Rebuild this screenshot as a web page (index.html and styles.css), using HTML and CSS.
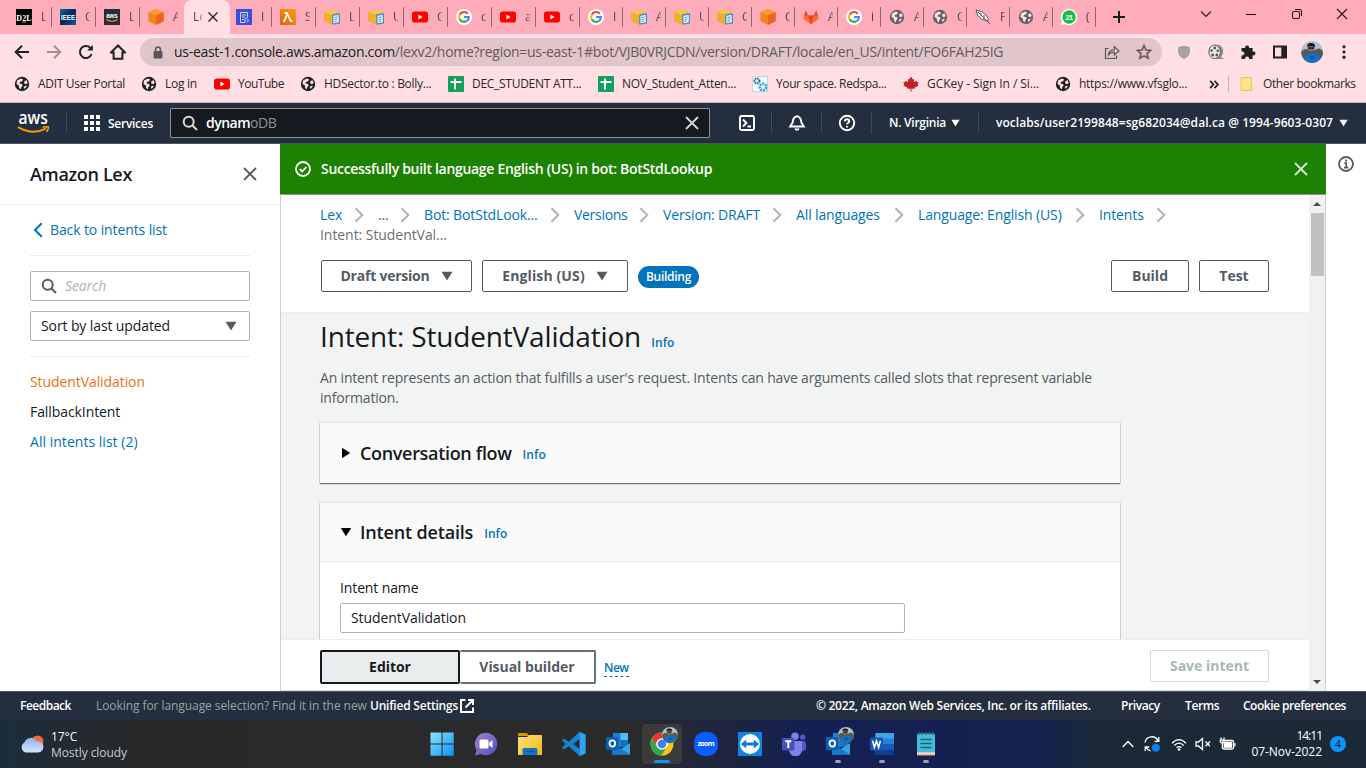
FILE: index.html
```html
<!DOCTYPE html>
<html lang="en">
<head>
<meta charset="utf-8">
<title>Amazon Lex</title>
<link rel="stylesheet" href="styles.css">
</head>
<body>
<svg class="defs" width="0" height="0">
  <defs>
    <linearGradient id="gWin" x1="0" y1="0" x2="1" y2="1"><stop offset="0" stop-color="#8be4ff"/><stop offset="1" stop-color="#0a93f5"/></linearGradient>
    <linearGradient id="gChat" x1="0" y1="0" x2="1" y2="1"><stop offset="0" stop-color="#a586c4"/><stop offset="1" stop-color="#4c4fc4"/></linearGradient>
    <linearGradient id="gFold" x1="0" y1="0" x2="1" y2="1"><stop offset="0" stop-color="#ffe083"/><stop offset="1" stop-color="#f9b70f"/></linearGradient>
    <linearGradient id="gCloud" x1="0" y1="0" x2="0" y2="1"><stop offset="0" stop-color="#8fb4ee"/><stop offset="1" stop-color="#d5e4fa"/></linearGradient>
    <linearGradient id="gLambda" x1="0" y1="1" x2="1" y2="0"><stop offset="0" stop-color="#d86613"/><stop offset="1" stop-color="#ff9d0a"/></linearGradient>
    <linearGradient id="gIeee" x1="0" y1="0" x2="1" y2="1"><stop offset="0" stop-color="#0a6aa8"/><stop offset=".5" stop-color="#03245c"/><stop offset="1" stop-color="#0a5c9e"/></linearGradient>
  </defs>
  <symbol id="globe" viewBox="0 0 16 16"><circle cx="8" cy="8" r="7.2"/><path d="M3 4.4 6.8 2.6 9 3.3 8.2 5.2 5.8 6.1 5.6 7.6 8 8 8.6 9.8 7.2 11.2 6.8 13.6 5 11.8 4.9 9.6 2.5 8ZM10.5 5.1 12.7 4.3 13.7 7 12 8.3 10.1 7.2ZM10.6 10 13 9.8 11 12.8 9.7 12Z" fill="#ffdfe4"/></symbol>
  <symbol id="cube" viewBox="0 0 16 16"><path d="M8 0 15.6 3.2V12.3L8 16 .4 12.3V3.2Z" fill="#f58220"/><path d="M8 0 15.6 3.2 8 6.6.4 3.2Z" fill="#fb9b30"/><path d="M8 6.6 15.6 3.2V12.3L8 16Z" fill="#e8661b"/></symbol>
  <symbol id="bucket" viewBox="0 0 16 16"><path d="M0 3 7 .4 14 3V11.8L7 15.5 0 12Z" fill="#eeb02c"/><path d="M0 3 7 .4 14 3 7 5.6Z" fill="#f6c55a"/><path d="M8.2 5.5 16 4.2V14.5L8.2 15.8Z" fill="#3f8fc6"/><path d="M9.5 6.8 14.7 6V13.3L9.5 14.2Z" fill="#fff"/><path d="M10.4 8.4 13.6 7.9M10.4 10.4 13.6 9.9M10.4 12.4 13 12" stroke="#3f8fc6"/></symbol>
  <symbol id="yt" viewBox="0 0 16 16"><rect y="2.4" width="16" height="11.2" rx="2.8" fill="#f00"/><path d="M6.4 5.6 10.6 8 6.4 10.4Z" fill="#fff"/></symbol>
  <symbol id="google" viewBox="0 0 16 16"><circle cx="8" cy="8" r="8" fill="#fff"/><g fill="none" stroke-width="2.1"><path d="M11.8 4.7A4.9 4.9 0 0 0 3.7 5.7" stroke="#ea4335"/><path d="M3.7 5.6A5 5 0 0 0 3.7 10.4" stroke="#fbbc05"/><path d="M3.7 10.3A4.9 4.9 0 0 0 11.2 11.7" stroke="#34a853"/><path d="M11.2 11.7Q12.9 10.3 12.9 8H8" stroke="#4285f4"/></g></symbol>
  <symbol id="sheet" viewBox="0 0 16 16"><rect width="16" height="16" rx="1" fill="#12a05c"/><path d="M2.5 6H13.5M7 2.5V13.5" stroke="#fff" stroke-width="2"/></symbol>
  <symbol id="loupe" viewBox="0 0 16 16"><g fill="none" stroke="currentColor" stroke-width="2"><circle cx="6.7" cy="6.7" r="5"/><path d="M10.5 10.5 15 15"/></g></symbol>
  <symbol id="cross" viewBox="0 0 16 16"><path d="M2 2 14 14M14 2 2 14" fill="none" stroke="currentColor" stroke-width="1.8"/></symbol>
  <symbol id="chev" viewBox="0 0 10 16"><path d="M1.5 1.2 8.3 8 1.5 14.8" fill="none" stroke="#aab7b8" stroke-width="2"/></symbol>
  <symbol id="down" viewBox="0 0 12 10"><path d="M.5.7H11.5L6 9.6Z" fill="currentColor"/></symbol>
  <symbol id="face" viewBox="0 0 22 22"><circle cx="11" cy="11" r="11" fill="#a9c4d4"/><path d="M0 11Q4 6 8 9H14Q19 5 22 11V13A11 11 0 0 1 1 15Z" fill="#5f5848"/><path d="M3.5 19Q4 12 10 11.5 18 11 19.5 17A11 11 0 0 1 3.5 19Z" fill="#1272c9"/><path d="M9 15.5 13 14.5 13.5 17 9.5 18Z" fill="#0b4c96"/><circle cx="10" cy="7" r="3.3" fill="#9c6c50"/><path d="M6.2 6Q5.8 2 10 2 14.4 2 14 6Q10 3.9 6.2 6Z" fill="#17171c"/><path d="M7 6.3H13.3V7.8H7Z" fill="#17171c"/></symbol>
  <symbol id="outlook" viewBox="0 0 24 24"><rect x="7" y="1" width="15" height="14" fill="#1a83d8"/><rect x="14.5" y="1" width="7.5" height="7" fill="#4bc0f3"/><rect x="14.5" y="8" width="7.5" height="7" fill="#1572be"/><path d="M6 11 15 17 24 11V22.5H6Z" fill="#35a5ea"/><path d="M6 11 24 22.5H6Z" fill="#1479cf"/><rect y="5" width="12.5" height="13" rx="1" fill="#0a60b4"/><ellipse cx="6.3" cy="11.5" rx="2.8" ry="3.2" fill="none" stroke="#fff" stroke-width="1.8"/></symbol>
</svg>

<header class="browser">
  <div class="tabstrip">
    <div class="tab"><svg viewBox="0 0 16 16"><rect width="16" height="16"/><text class="fav-serif" x="0.3" y="11.6" fill="#fff" textLength="15.4">D2L</text><path d="M6 13H10" stroke="#f7941e"/></svg><span>L</span></div>
    <div class="tab"><svg viewBox="0 0 16 16"><rect width="16" height="16" fill="url(#gIeee)"/><text class="fav-sans" x="1" y="11" fill="#fff" textLength="14" lengthAdjust="spacingAndGlyphs">IEEE</text></svg><span>C</span></div>
    <div class="tab"><svg viewBox="0 0 16 16"><rect width="16" height="16" fill="#232f3e"/><text class="fav-sans small" x="2.2" y="8.6" fill="#fff" textLength="11.6" lengthAdjust="spacingAndGlyphs">aws</text><path d="M2.5 10.5Q8 14 13.5 10.5" stroke="#f90" fill="none" stroke-width="1.2"/></svg><span>L</span></div>
    <div class="tab plain"><svg><use href="#cube"/></svg><span>A</span></div>
    <div class="tab active"><span>Le</span><svg class="tab-close"><use href="#cross"/></svg></div>
    <div class="tab"><svg viewBox="0 0 16 16"><rect width="16" height="16" fill="#3b4ddb"/><path d="M4.5 3.5H11.5V8.5L9 10V13.5H4.5ZM6 6H10M6 8H9M6 10.5H8M11.5 10 12.5 12 10.5 13" fill="none" stroke="#cfd6ff"/></svg><span>I</span></div>
    <div class="tab"><svg viewBox="0 0 16 16"><rect width="16" height="16" fill="url(#gLambda)"/><path d="M4.5 3H7.5L11.3 11.4 12.5 11V13H10.3L7.4 6.8 4.8 13H2.8L6.5 5 4.5 4.8Z" fill="#fff"/></svg><span>S</span></div>
    <div class="tab"><svg><use href="#bucket"/></svg><span>L</span></div>
    <div class="tab"><svg><use href="#bucket"/></svg><span>U</span></div>
    <div class="tab"><svg><use href="#yt"/></svg><span>C</span></div>
    <div class="tab"><svg><use href="#google"/></svg><span>c</span></div>
    <div class="tab"><svg><use href="#yt"/></svg><span>a</span></div>
    <div class="tab"><svg><use href="#yt"/></svg><span>c</span></div>
    <div class="tab narrow"><svg><use href="#google"/></svg><span>I</span></div>
    <div class="tab narrow"><svg><use href="#bucket"/></svg><span>A</span></div>
    <div class="tab narrow"><svg><use href="#bucket"/></svg><span>U</span></div>
    <div class="tab narrow"><svg><use href="#bucket"/></svg><span>C</span></div>
    <div class="tab narrow"><svg><use href="#cube"/></svg><span>C</span></div>
    <div class="tab narrow"><svg viewBox="0 0 16 16"><path d="M8 15.5.2 9.5 2.8 1.5 5 6.6H11L13.2 1.5 15.8 9.5Z" fill="#fc6d26"/><path d="M8 15.5 5 6.6H11Z" fill="#e24329"/><path d="M2.8 1.5 5 6.6H1.2ZM13.2 1.5 11 6.6H14.8Z" fill="#e24329"/></svg><span>A</span></div>
    <div class="tab narrow"><svg><use href="#google"/></svg><span>i</span></div>
    <div class="tab narrow grey"><svg><use href="#globe"/></svg><span>A</span></div>
    <div class="tab narrow grey"><svg><use href="#globe"/></svg><span>C</span></div>
    <div class="tab narrow"><svg viewBox="0 0 16 16"><path d="M1 1Q8 2 11 6T13 12Q6 11 3 7Z" fill="#fff" stroke="#444" stroke-width=".9"/><path d="M3 3 15 15M6 4 6 7M9 6 9 10" stroke="#444" stroke-width=".9"/></svg><span>F</span></div>
    <div class="tab narrow grey"><svg><use href="#globe"/></svg><span>A</span></div>
    <div class="tab narrow"><svg viewBox="0 0 16 16"><path d="M8 0A8 8 0 1 1 4.2 15L0 16 1 12A8 8 0 0 1 8 0Z" fill="#fff"/><circle cx="8.1" cy="8" r="6.7" fill="#12c144"/><text class="fav-sans" x="4.2" y="11" fill="#fff" textLength="8">21</text></svg><span>(</span></div>
    <svg class="new-tab" viewBox="0 0 12 12"><path d="M6 0V12M0 6H12" stroke="#1d1d1f" stroke-width="2"/></svg>
    <div class="window-buttons">
      <svg viewBox="0 0 12 12"><path d="M1 3.5 6 8.5 11 3.5"/></svg>
      <svg viewBox="0 0 12 12"><path d="M1 6.5H11"/></svg>
      <svg viewBox="0 0 12 12"><rect x="1.5" y="3.5" width="7" height="7" rx="1.5"/><path d="M4 1.5H8.5Q10.5 1.5 10.5 3.5V8"/></svg>
      <svg viewBox="0 0 12 12"><path d="M1 1 11 11M11 1 1 11"/></svg>
    </div>
  </div>

  <div class="toolbar">
    <div class="nav-buttons">
      <svg viewBox="0 0 16 16"><path d="M15 8H2M8 1.7 1.7 8 8 14.3"/></svg>
      <svg class="dim" viewBox="0 0 16 16"><path d="M1 8H14M8 1.7 14.3 8 8 14.3"/></svg>
      <svg viewBox="0 0 16 16"><path d="M13.6 10A6 6 0 1 1 12.2 3.8L14 5.6"/><path d="M14.8 1V6.6H9.2Z" fill="#1f2023" stroke="none"/></svg>
      <svg viewBox="0 0 16 16"><path d="M8 1.5 1 8.5H3.6V14.8H12.4V8.5H15Z"/></svg>
    </div>
    <div class="address">
      <svg class="lock" viewBox="0 0 10 13"><rect x=".6" y="5" width="8.8" height="7.6" rx="1" fill="#5b5357"/><path d="M2.6 5V3.4A2.4 2.4 0 0 1 7.4 3.4V5" fill="none" stroke="#5b5357" stroke-width="1.5"/></svg>
      <span class="url"><b>us-east-1.console.aws.amazon.com</b>/lexv2/home?region=us-east-1#bot/VJB0VRJCDN/version/DRAFT/locale/en_US/intent/FO6FAH25IG</span>
      <svg class="share" viewBox="0 0 16 16"><path d="M4.5 4.5H1.5V14.5H12.5V11.5M4.5 10.8Q5 5.8 10.3 5.8V2.6L15 7 10.3 11V8Q6.5 8 4.5 10.8Z"/></svg>
      <svg class="star" viewBox="0 0 16 16"><path d="M8 1.6 9.9 6 14.7 6.4 11 9.6 12.2 14.3 8 11.8 3.8 14.3 5 9.6 1.3 6.4 6.1 6Z"/></svg>
    </div>
    <div class="extensions">
      <svg viewBox="0 0 16 16"><path d="M8 1.5 14 3.2V8Q13.5 12.5 8 15 2.5 12.5 2 8V3.2Z" fill="#a5a3a4"/></svg>
      <svg viewBox="0 0 16 16"><path d="M6 1 11.5 1Q16 4 15 9L13 14H15.5V15H8Z" fill="#8b8b8b"/><ellipse cx="6.6" cy="7.8" rx="5.8" ry="6.8" fill="#e6e6e6" stroke="#5d5d5d"/><g fill="#555"><circle cx="6.8" cy="4" r="1.4"/><circle cx="3.5" cy="6.6" r="1.3"/><circle cx="9.8" cy="6.8" r="1.3"/><circle cx="4.7" cy="11" r="1.4"/><circle cx="8.8" cy="11" r="1.4"/></g></svg>
      <svg viewBox="0 0 16 16"><path d="M1.5 4H5.2A2 2 0 1 1 9 4H12.6V7.6A2 2 0 1 1 12.6 11.2V15H9A2 2 0 1 0 5.2 15H1.5V11.2A2 2 0 1 0 1.5 7.6Z" fill="#202124"/></svg>
      <svg viewBox="0 0 16 16"><path d="M1 1.5H15V14.5H1ZM3 3.5V12.5H9.3V3.5Z" fill="#202124" fill-rule="evenodd"/></svg>
      <svg class="profile"><use href="#face"/></svg>
      <svg class="dots" viewBox="0 0 4 16"><circle cx="2" cy="2.8" r="1.6"/><circle cx="2" cy="8" r="1.6"/><circle cx="2" cy="13.2" r="1.6"/></svg>
    </div>
  </div>

  <nav class="bookmarks">
    <a class="bm b1"><svg><use href="#globe"/></svg><span class="t-adit">ADIT User Portal</span></a>
    <a class="bm b2"><svg><use href="#globe"/></svg><span>Log in</span></a>
    <a class="bm b3"><svg><use href="#yt"/></svg><span class="t-tight">YouTube</span></a>
    <a class="bm b4"><svg><use href="#globe"/></svg><span>HDSector.to : Bolly...</span></a>
    <a class="bm b5"><svg><use href="#sheet"/></svg><span>DEC_STUDENT ATT...</span></a>
    <a class="bm b6"><svg><use href="#sheet"/></svg><span>NOV_Student_Atten...</span></a>
    <a class="bm b7"><svg viewBox="0 0 16 16"><rect x=".5" y=".5" width="15" height="15" fill="#f4fafc" stroke="#c5d2d6"/><circle cx="5" cy="5" r="2.5" fill="none" stroke="#1d6f92" stroke-width="2" stroke-dasharray="1.6 .7"/><circle cx="11" cy="11" r="3.2" fill="none" stroke="#35a8da" stroke-width="2.6" stroke-dasharray="2 .8"/></svg><span class="t-tighter">Your space. Redspa...</span></a>
    <a class="bm b8"><svg viewBox="0 0 16 16"><path d="M8 .5 9.8 3.6 11.2 2.9 10.8 6.3 13.3 4.6 13.6 6 15.8 6.3 14.6 8.6 15.5 9.4 11.2 12 11.6 13 8.5 12.6V15.5H7.5V12.6L4.4 13 4.8 12 .5 9.4 1.4 8.6.2 6.3 2.4 6 2.7 4.6 5.2 6.3 4.8 2.9 6.2 3.6Z" fill="#c2211f"/></svg><span class="t-loose">GCKey - Sign In / Si...</span></a>
    <a class="bm b9"><svg><use href="#globe"/></svg><span>https://www.vfsglo...</span></a>
    <span class="more"><svg viewBox="0 0 9 8"><path d="M1 .8 4 4 1 7.2M5 .8 8 4 5 7.2"/></svg></span>
    <a class="bm other"><svg viewBox="0 0 16 16"><path d="M2 1.5H12.5V11L11 14.5H2Z" fill="#fde48c" stroke="#e8c94b"/><path d="M11 10.5H13V14.5H11Z" fill="#fde48c" stroke="#e8c94b" stroke-width=".8"/></svg><span class="t-tighter">Other bookmarks</span></a>
  </nav>
</header>

<div class="aws-header">
  <svg class="aws-logo" viewBox="0 0 32 22"><text x="1.5" y="11.5" fill="#fff" textLength="28.5" lengthAdjust="spacingAndGlyphs">aws</text><path d="M1 14.5Q15 22.5 28 16" fill="none" stroke="#f90" stroke-width="1.9"/><path d="M25 14.5 30.3 14.2Q31 16 28.6 19.3" fill="none" stroke="#f90" stroke-width="1.5"/></svg>
  <i class="sep s1"></i>
  <svg class="grid-icon" viewBox="0 0 16 16"><path d="M0 0H4V4H0ZM6 0H10V4H6ZM12 0H16V4H12ZM0 6H4V10H0ZM6 6H10V10H6ZM12 6H16V10H12ZM0 12H4V16H0ZM6 12H10V16H6ZM12 12H16V16H12Z" fill="#fff"/></svg>
  <span class="services">Services</span>
  <div class="aws-search"><svg class="ico16"><use href="#loupe"/></svg><span class="q"><b>dynam</b>oDB</span><svg class="ico16"><use href="#cross"/></svg></div>
  <div class="aws-item"><svg viewBox="0 0 18 18"><rect x="2" y="2" width="14" height="14" rx="1.5"/><path d="M5 5.5 8.4 9 5 12.5M9.5 12.5H13"/></svg></div>
  <div class="aws-item"><svg viewBox="0 0 18 18"><path d="M9 2.2Q13.3 3.5 13.3 8.5L15.8 12.5H2.2L4.7 8.5Q4.7 3.5 9 2.2ZM7.2 14.5Q9 17 10.8 14.5"/></svg></div>
  <div class="aws-item"><svg viewBox="0 0 18 18"><circle cx="9" cy="9" r="7.2"/><path d="M6.8 7.4Q6.9 5.3 9 5.3T11.2 7.3C11.2 8.9 9 8.8 9 10.6M9 12V13.6"/></svg></div>
  <div class="aws-region"><span>N. Virginia</span><svg class="tri"><use href="#down"/></svg></div>
  <div class="aws-user"><span>voclabs/user2199848=sg682034@dal.ca @ 1994-9603-0307</span><svg class="tri"><use href="#down"/></svg></div>
</div>

<main class="console">
  <aside class="side">
    <div class="side-head"><h2>Amazon Lex</h2><svg class="ico16"><use href="#cross"/></svg></div>
    <div class="side-body">
      <a class="back"><svg viewBox="0 0 10 16"><path d="M8.8 1.2 2 8 8.8 14.8" fill="none" stroke="#0073bb" stroke-width="2"/></svg>Back to intents list</a>
      <div class="field search"><svg class="ico16"><use href="#loupe"/></svg><em>Search</em></div>
      <div class="field select"><span>Sort by last updated</span><svg class="tri"><use href="#down"/></svg></div>
      <ul class="intents">
        <li class="current">StudentValidation</li>
        <li>FallbackIntent</li>
        <li class="all">All intents list (2)</li>
      </ul>
    </div>
  </aside>

  <section class="center">
    <div class="flash">
      <svg class="ok" viewBox="0 0 16 16"><circle cx="8" cy="8" r="7"/><path d="M4.7 8 7.2 10.4 11.4 6"/></svg>
      <span>Successfully built language English (US) in bot: BotStdLookup</span>
      <svg class="ico16"><use href="#cross"/></svg>
    </div>
    <div class="scroller">
      <div class="page">
        <div class="page-top">
          <ol class="crumbs">
            <li class="c1">Lex<svg><use href="#chev"/></svg></li>
            <li class="c2">...<svg><use href="#chev"/></svg></li>
            <li class="c3">Bot: BotStdLook...<svg><use href="#chev"/></svg></li>
            <li class="c4">Versions<svg><use href="#chev"/></svg></li>
            <li class="c5">Version: DRAFT<svg><use href="#chev"/></svg></li>
            <li class="c6">All languages<svg><use href="#chev"/></svg></li>
            <li class="c7">Language: English (US)<svg><use href="#chev"/></svg></li>
            <li class="c8">Intents<svg><use href="#chev"/></svg></li>
            <li class="here">Intent: StudentVal...</li>
          </ol>
          <div class="actions">
            <button class="btn draft">Draft version<svg class="tri"><use href="#down"/></svg></button>
            <button class="btn lang">English (US)<svg class="tri"><use href="#down"/></svg></button>
            <span class="badge">Building</span>
            <button class="btn build">Build</button>
            <button class="btn test">Test</button>
          </div>
        </div>
        <div class="page-body">
          <h1>Intent: StudentValidation <a class="info">Info</a></h1>
          <p class="desc">An intent represents an action that fulfills a user's request. Intents can have arguments called slots that represent variable<br>information.</p>
          <div class="card"><div class="card-head"><svg viewBox="0 0 12 12"><path d="M2 .8 10.2 6 2 11.2Z"/></svg><h3 class="flow">Conversation flow</h3><a class="info">Info</a></div></div>
          <div class="card open">
            <div class="card-head"><svg viewBox="0 0 12 12"><path d="M.8 2H11.2L6 10.2Z"/></svg><h3 class="details">Intent details</h3><a class="info">Info</a></div>
            <div class="card-body"><label>Intent name</label><div class="field name">StudentValidation</div></div>
          </div>
        </div>
        <div class="page-foot">
          <div class="seg on">Editor</div><div class="seg off">Visual builder</div><a class="info new">New</a>
          <button class="btn save">Save intent</button>
        </div>
      </div>
      <div class="scrollbar">
        <svg viewBox="0 0 8 4"><path d="M0 4 4 0 8 4Z"/></svg>
        <div class="thumb"></div>
        <svg viewBox="0 0 8 4"><path d="M0 0 4 4 8 0Z"/></svg>
      </div>
    </div>
  </section>
  <aside class="help"><svg viewBox="0 0 16 16"><circle cx="8" cy="8" r="7" fill="none" stroke="#545b64" stroke-width="1.8"/><path d="M6.3 7.2H8.2V11.4M6 11.6H10.3" fill="none" stroke="#545b64" stroke-width="1.7"/><rect x="7" y="3.6" width="2" height="1.9" fill="#545b64"/></svg></aside>
</main>

<footer class="aws-footer">
  <b class="feedback">Feedback</b>
  <span class="looking">Looking for language selection? Find it in the new</span>
  <b class="unified">Unified Settings</b>
  <svg class="ext" viewBox="0 0 14 14"><path d="M5.5 1H1V13H13V8.5M8 1H13V6M13 1 5.5 8.5"/></svg>
  <b class="copy">© 2022, Amazon Web Services, Inc. or its affiliates.</b>
  <b class="privacy">Privacy</b><b class="terms">Terms</b><b class="cookie">Cookie preferences</b>
</footer>

<div class="taskbar">
  <svg class="weather" viewBox="0 0 24 18"><circle cx="17.5" cy="6.5" r="6" fill="#f26b3c"/><path d="M6 17.5A5.5 5.5 0 0 1 4.5 7.3 6.5 6.5 0 0 1 16.5 6.5 5.6 5.6 0 1 1 18.5 17.5Z" fill="url(#gCloud)"/></svg>
  <div class="weather-text"><span>17°C</span><span>Mostly cloudy</span></div>
  <div class="apps">
    <div class="app"><svg viewBox="0 0 24 24"><path d="M.5.5H11.6V11.6H.5ZM12.6.5H23.7V11.6H12.6ZM.5 12.6H11.6V23.7H.5ZM12.6 12.6H23.7V23.7H12.6Z" fill="url(#gWin)"/></svg></div>
    <div class="app"><svg viewBox="0 0 24 24"><path d="M12 .8A11.2 11.2 0 1 1 7 22L1 23.5 2.6 18A11.2 11.2 0 0 1 12 .8Z" fill="url(#gChat)"/><rect x="5.5" y="7.5" width="9" height="9" rx="1.5" fill="#fff"/><path d="M15 11 18.5 8V16L15 13Z" fill="#fff"/></svg></div>
    <div class="app"><svg viewBox="0 0 24 24"><path d="M0 1.5Q0 1 1 1H9L11 4H0Z" fill="#d99807"/><path d="M0 5H9L11 3H23Q24 3 24 4V23H0Z" fill="url(#gFold)"/><path d="M4.5 23V17.5Q4.5 16 6 16H18Q19.5 16 19.5 17.5V23Z" fill="#1274c5"/><path d="M8 19.5H16" stroke="#0b4f91"/></svg></div>
    <div class="app"><svg viewBox="0 0 24 24"><path d="M17.5 0 23.5 2.6V21.4L17.5 24 6.6 14 2.4 17.3.5 16.2V15L3.9 12 .5 9V7.8L2.4 6.7 6.6 10ZM17.8 7 11 12 17.8 17Z" fill="#1487d4" fill-rule="evenodd"/><path d="M17.5 0 23.5 2.6V21.4L17.8 24Z" fill="#2fa5ed"/></svg></div>
    <div class="app"><svg><use href="#outlook"/></svg></div>
    <div class="app focus"><svg viewBox="0 0 24 24"><circle cx="12" cy="12" r="11.5" fill="#fcc419"/><path d="M12 .5A11.5 11.5 0 0 1 22 6H12Z" fill="#e33b2e"/><path d="M2 6.2A11.5 11.5 0 0 1 22 6.2H12L7 15Z" fill="#e33b2e"/><path d="M2 6.2A11.5 11.5 0 0 0 11.3 23.5L17 15H7Z" fill="#2da94f"/><circle cx="12" cy="12" r="5.8" fill="#fff"/><circle cx="12" cy="12" r="4.4" fill="#3f82ee"/></svg><svg class="who"><use href="#face"/></svg></div>
    <div class="app"><svg viewBox="0 0 24 24"><rect width="24" height="24" rx="10" fill="#0b5cff"/><text class="zoom" x="3.5" y="14" fill="#fff" textLength="17">zoom</text></svg></div>
    <div class="app"><svg viewBox="0 0 24 24"><rect width="24" height="24" fill="#0d85e4"/><circle cx="12" cy="12" r="10" fill="#fff"/><path d="M2.8 12 8.2 7.5V10.5H15.8V7.5L21.2 12 15.8 16.5V13.5H8.2V16.5Z" fill="#0d7bd8"/></svg></div>
    <div class="app"><svg viewBox="0 0 24 24"><circle cx="13" cy="4.2" r="3.7" fill="#7b83eb"/><circle cx="20.7" cy="5.2" r="2.7" fill="#5059c9"/><rect x="17" y="9" width="7" height="10" rx="3" fill="#5059c9"/><path d="M7 9H20V18A6.5 6.5 0 0 1 7 18Z" fill="#7b83eb"/><rect y="6" width="12.5" height="12.5" rx="1" fill="#474fbd"/><path d="M3.3 9.3H9.3M6.3 9.3V16" stroke="#fff" stroke-width="1.9"/></svg></div>
    <div class="app run"><svg><use href="#outlook"/></svg><svg class="who"><use href="#face"/></svg></div>
    <div class="app run"><svg viewBox="0 0 24 24"><rect x="5.5" y="1" width="18.5" height="22" rx="1.5" fill="#2b7cd3"/><path d="M5.5 1H24V6.5H5.5Z" fill="#41a5ee"/><path d="M5.5 12H24V17.5H5.5Z" fill="#185abd"/><path d="M5.5 17.5H24V23H5.5Z" fill="#103f91"/><rect y="5.5" width="13" height="13" rx="1" fill="#1456b4"/><path d="M2.6 8.7 4.4 15.2 6.5 9 8.6 15.2 10.4 8.7" fill="none" stroke="#fff" stroke-width="1.6"/></svg></div>
    <div class="app run"><svg viewBox="0 0 24 24"><rect x="3" y="1.5" width="18" height="22" rx="1.5" fill="#48b9d8"/><rect x="3" y="20.5" width="18" height="3.2" fill="#f0e6dd"/><path d="M3 23.3H21" stroke="#b5562a" stroke-width="1.3"/><path d="M5 0V3M8.5 0V3M12 0V3M15.5 0V3M19 0V3" stroke="#1a6f92" stroke-width="1.4"/><path d="M6.5 7.5H17.5M6.5 11.5H17.5M6.5 15.5H17.5" stroke="#14637f" stroke-width="1.6"/></svg></div>
  </div>
  <div class="tray">
    <svg class="up" viewBox="0 0 12 8"><path d="M.7 7 6 1.5 11.3 7"/></svg>
    <svg class="sync" viewBox="0 0 18 18"><path d="M2 7.5A6.8 6.8 0 0 1 15 6M15.8 2V6.3H11.6M7.5 15.8A7 7 0 0 1 3 12.2M2.2 16V12H6.3"/><circle cx="12.8" cy="12.8" r="4" fill="#0a84e8" stroke="none"/></svg>
    <svg class="wifi" viewBox="0 0 16 13"><path d="M1 5.2Q8-2 15 5.2M3.3 7.5Q8 2.6 12.7 7.5M5.6 9.8Q8 7.3 10.4 9.8"/><circle cx="8" cy="11.5" r="1.3" fill="#fff" stroke="none"/></svg>
    <svg class="vol" viewBox="0 0 16 14"><path d="M1 5H3.5L7.5 1.5V12.5L3.5 9H1ZM10.5 4.5 15 9.2M15 4.5 10.5 9.2"/></svg>
    <svg class="bat" viewBox="0 0 16 14"><rect x="3" y="3.5" width="11" height="8.5" rx="1.5"/><path d="M6 5.5H12V10.2H5V7Z" fill="#fff"/><path d="M15.3 6V9.5M1.5.5V3M4.5.5V3M.8 3.2H5.2V5Q3 7 .8 5ZM3 6V12" stroke-width="1.3"/></svg>
  </div>
  <div class="clock"><span>14:11</span><span>07-Nov-2022</span></div>
  <div class="count">4</div>
</div>
</body>
</html>
```
FILE: styles.css
```css
* { box-sizing: border-box; }
body { margin: 0; width: 1366px; height: 768px; overflow: hidden; display: flex; flex-direction: column; font-family: "Open Sans", "Noto Sans", sans-serif; font-size: 14px; line-height: 20px; color: #16191f; background: #fff; }
svg { display: block; flex: none; }
.defs { position: absolute; }
h1, h2, h3, p, ul, ol { margin: 0; padding: 0; }
ul, ol { list-style: none; }
button { font-family: inherit; margin: 0; }
.ico16 { width: 16px; height: 16px; }
.tri { width: 12px; height: 10px; }

/* browser chrome */
.browser { height: 103px; flex: none; background: #ffdfe4; border-bottom: 1px solid #cdb5bb; font-size: 12px; }
.tabstrip { height: 34px; display: flex; background: #ffacba; padding-left: 8px; }
.tab { width: 44px; height: 34px; display: flex; align-items: center; padding-left: 8px; background: linear-gradient(#8a6a70, #8a6a70) right 0 top 7px / 1px 20px no-repeat; }
.tab svg { width: 16px; height: 16px; margin-right: 9px; }
.tab span { width: 5px; overflow: hidden; color: #4a3f44; line-height: 20px; mask-image: linear-gradient(90deg, #000 40%, rgba(0,0,0,.35)); }
.tab.narrow { width: 43px; }
.tab.plain { background: none; }
.tab.grey svg { fill: #5f6368; }
.tab.active { background: #ffdfe4; border-radius: 8px 8px 0 0; width: 46px; margin-right: -2px; padding-left: 9px; }
.tab.active span { width: 9px; }
.tab.active svg { width: 12px; height: 12px; margin: 0 0 0 5px; color: #2a2024; }
.tab.active use { stroke: #2a2024; }
.fav-serif { font: bold 8px "Liberation Serif", serif; }
.fav-sans { font: bold 8px "Liberation Sans", sans-serif; }
.fav-sans.small { font-size: 7px; }
.new-tab { width: 12px; height: 12px; margin: 11px 0 0 17px; }
.window-buttons { display: flex; gap: 33.5px; margin: 8px 0 0 auto; padding-right: 18px; }
.window-buttons svg { width: 12px; height: 12px; fill: none; stroke: #221a1d; stroke-width: 1.1; }
.toolbar { height: 36px; display: flex; align-items: center; padding-left: 14px; }
.nav-buttons { display: flex; gap: 16px; }
.nav-buttons svg { width: 16px; height: 16px; fill: none; stroke: #1f2023; stroke-width: 2; }
.nav-buttons .dim { stroke: #a58e94; }
.address { width: 1022px; height: 28px; margin-left: 14px; border-radius: 14px; background: #e0c5ca; display: flex; align-items: center; padding: 0 10px 0 13px; }
.lock { width: 10px; height: 13px; margin-right: 11px; }
.url { width: 930px; flex: none; font-size: 14px; letter-spacing: -.285px; color: #65595d; white-space: nowrap; }
.url b { font-weight: 400; color: #201c1e; }
.address .share, .address .star { width: 16px; height: 16px; margin-right: 16px; fill: none; stroke: #5f5358; stroke-width: 1.2; }
.address .star { margin: 0; stroke-width: 1.5; }
.extensions { display: flex; align-items: center; margin-left: 14px; gap: 16px; }
.extensions svg { width: 16px; height: 16px; }
.extensions .profile { width: 22px; height: 22px; margin-left: -3px; }
.extensions .dots { width: 4px; height: 16px; fill: #202124; margin-left: 3px; }
.bookmarks { height: 28px; display: flex; align-items: center; padding-left: 14px; }
.bm { display: flex; align-items: center; white-space: nowrap; color: #2b2628; letter-spacing: -.28px; flex: none; }
.bm svg { width: 16px; height: 16px; margin-right: 8px; fill: #202124; }
.bm .t-adit { letter-spacing: -.31px; }
.bm .t-tight { letter-spacing: -.48px; }
.bm .t-tighter { letter-spacing: -.39px; }
.bm .t-loose { letter-spacing: -.06px; }
.b1 { width: 127px; } .b2 { width: 73px; } .b3 { width: 86px; } .b4 { width: 148px; } .b5 { width: 150px; }
.b6 { width: 154px; } .b7 { width: 151px; } .b8 { width: 152px; } .b9 { width: 154px; }
.more { width: 19px; }
.more svg { width: 10px; height: 9px; fill: none; stroke: #202124; stroke-width: 1.6; }
.other { border-left: 1px solid #cdb0b6; padding-left: 10px; height: 16px; }

/* console header */
.aws-header { height: 41px; flex: none; background: #232f3e; border-bottom: 1px solid #4b5563; display: flex; align-items: center; color: #fff; font-size: 12px; font-weight: 600; padding-left: 17px; }
.aws-logo { width: 33px; height: 23px; font: 600 17px "Open Sans", sans-serif; }
.sep { width: 1px; height: 22px; background: #3e4a57; margin: 0 17px 0 16px; }
.grid-icon { width: 16px; height: 16px; }
.services { width: 70px; padding: 1px 0 0 8px; letter-spacing: -.27px; }
.aws-search { width: 540px; height: 30px; border: 1px solid #879596; background: #16191f; display: flex; align-items: center; padding: 0 9px 0 11px; color: #d5dbdb; border-radius: 1px; }
.q { flex: 1; padding-left: 8px; font-size: 14px; font-weight: 400; color: #879596; letter-spacing: -.5px; }
.q b { color: #fff; font-weight: 600; }
.aws-item { width: 50px; display: flex; justify-content: center; height: 22px; align-items: center; border-right: 1px solid #3e4a57; }
.aws-search + .aws-item { width: 62px; padding-left: 12px; }
.aws-item svg { width: 18px; height: 18px; fill: none; stroke: #fff; stroke-width: 1.9; }
.aws-region, .aws-user { display: flex; align-items: center; white-space: nowrap; }
.aws-region { width: 107px; height: 22px; padding-left: 17px; letter-spacing: -.25px; border-right: 1px solid #3e4a57; }
.aws-region span { width: 62px; }
.aws-user { padding-left: 17px; letter-spacing: .06px; }
.aws-user span { width: 343px; }
.aws-header .tri { width: 9px; height: 8px; }

/* console layout */
.console { height: 547px; flex: none; display: flex; }
.side { width: 280px; }
.side-head { height: 61px; border-bottom: 1px solid #eaeded; padding: 0 22px 0 30px; display: flex; align-items: center; justify-content: space-between; color: #545b64; }
.side-head h2 { font-size: 18px; font-weight: 600; letter-spacing: -.33px; color: #16191f; }
.side-body { padding: 15px 30px; color: #16191f; }
.back { display: flex; align-items: center; color: #0073bb; letter-spacing: -.11px; padding-bottom: 15px; border-bottom: 1px solid #eaeded; }
.back svg { width: 10px; height: 16px; margin: 0 7px 0 3px; }
.field { height: 30px; border: 1px solid #aab7b8; border-radius: 2px; display: flex; align-items: center; padding: 0 10px; background: #fff; letter-spacing: -.11px; }
.side .field { margin-top: 15px; }
.side .select { margin-top: 10px; justify-content: space-between; padding-right: 12px; color: #16191f; }
.select .tri, .btn .tri, .search svg { color: #545b64; }
.search em { color: #aab7b8; margin-left: 8px; }
.intents { margin-top: 15px; padding-top: 15px; border-top: 1px solid #eaeded; letter-spacing: -.08px; }
.intents li { height: 20px; margin-bottom: 10px; }
.intents .current { color: #ec7211; }
.intents .all { color: #0073bb; letter-spacing: .03px; }

.center { width: 1046px; display: flex; flex-direction: column; }
.flash { height: 50px; background: #1d8102; color: #fff; display: flex; align-items: center; padding: 0 17px 0 15px; }
.flash .ok { width: 16px; height: 16px; fill: none; stroke: #fff; stroke-width: 1.8; }
.flash span { flex: 1; padding-left: 10px; font-weight: 600; letter-spacing: -.3px; }
.flash .ico16 { color: #dbe9d7; }
.scroller { flex: 1; display: flex; border: 1px solid #c9cfd0; border-width: 1px 1px 0 1px; border-top-color: #879596; min-height: 0; }
.page { width: 1028px; display: flex; flex-direction: column; border-bottom: 1px solid #d5dbdb; min-height: 0; }
.page-top { height: 118px; flex: none; padding: 10px 40px 0 39px; border-bottom: 1px solid #eaeded; }
.crumbs { display: flex; flex-wrap: wrap; color: #0073bb; }
.crumbs li { height: 20px; display: flex; align-items: center; justify-content: space-between; padding-right: 14px; letter-spacing: -.13px; white-space: nowrap; }
.crumbs svg { width: 10px; height: 16px; }
.c1 { width: 58px; } .c2 { width: 46px; } .c3 { width: 150px; } .c4 { width: 89px; }
.crumbs .c4 { letter-spacing: -.3px; }
.crumbs .c5 { width: 133px; letter-spacing: -.15px; } .c6 { width: 122px; } .c7 { width: 181px; } .c8 { width: 81px; }
.crumbs .here { color: #687078; letter-spacing: -.06px; }
.actions { display: flex; align-items: center; margin-top: 15px; padding-left: 1px; }
.btn { height: 32px; border: 1px solid #545b64; border-radius: 2px; background: #fff; color: #545b64; font-size: 14px; font-weight: 700; line-height: 20px; padding: 0; display: flex; align-items: center; justify-content: center; white-space: nowrap; letter-spacing: 0; }
.draft { width: 151px; gap: 11px; letter-spacing: -.23px; }
.lang { width: 146px; gap: 11px; margin-left: 10px; letter-spacing: .12px; }
.badge { margin: 1px 0 0 10px; width: 61px; height: 22px; border-radius: 11px; background: #0073bb; color: #fff; font-size: 12px; font-weight: 600; letter-spacing: -.27px; display: flex; align-items: center; justify-content: center; }
.build { width: 78px; margin-left: auto; }
.test { width: 70px; margin-left: 10px; }
.page-body { flex: 1; min-height: 0; overflow: hidden; background: #f2f3f3; padding: 5px 0 0 39px; }
.info { color: #0073bb; font-size: 12px; font-weight: 600; letter-spacing: .05px; }
h1 { font-size: 28px; line-height: 36px; font-weight: 400; letter-spacing: -.16px; white-space: nowrap; }
h1 .info { margin-left: 3px; }
.desc { margin: 7px 0 15px; color: #545b64; letter-spacing: -.18px; white-space: nowrap; }
.card { width: 800px; background: #fff; height: 60px; margin-bottom: 20px; box-shadow: 0 1px 1px #687078, 0 0 0 1px #dfe2e3, 1px 0 0 #c3c9cc, -1px 0 0 #c3c9cc; }
.card.open { height: 200px; }
.card-head { height: 59px; display: flex; align-items: center; padding-left: 20px; background: #fafafa; }
.open .card-head { border-bottom: 1px solid #eaeded; }
.card-head svg { width: 12px; height: 12px; margin-right: 8px; }
.card-head .info { margin: 4px 0 0 11px; }
.card h3 { font-size: 18px; font-weight: 600; }
.flow { letter-spacing: -.33px; }
.details { letter-spacing: -.17px; }
.card-body { padding: 16px 20px; letter-spacing: -.12px; }
.card-body label { display: block; margin-bottom: 5px; }
.card-body .name { width: 565px; letter-spacing: -.08px; }
.page-foot { height: 51px; flex: none; border-top: 1px solid #eaeded; background: #fff; padding: 0 40px 1px 39px; display: flex; align-items: center; }
.seg { height: 34px; margin-top: 4px; font-weight: 700; display: flex; align-items: center; justify-content: center; border: 2px solid #16191f; border-radius: 2px; letter-spacing: -.05px; }
.seg.on { width: 140px; background: #eaeded; }
.seg.off { width: 136px; border-color: #687078; border-left: 0; color: #545b64; }
.info.new { margin: 6px 0 0 8px; border-bottom: 1px dashed #0073bb; line-height: 17px; letter-spacing: -.5px; }
.save { width: 119px; margin: 2px 0 0 auto; border-color: #d5dbdb; color: #aab7b8; }
.scrollbar { flex: 1; background: #f1f1f1; display: flex; flex-direction: column; align-items: center; padding: 7px 0; }
.scrollbar svg { width: 8px; height: 4px; fill: #4d4d4d; }
.scrollbar svg:last-child { margin-top: auto; }
.thumb { width: 13px; height: 63px; background: #c1c1c1; margin-top: 7px; }
.help { width: 40px; padding: 12px; }
.help svg { width: 16px; height: 16px; }

/* console footer */
.aws-footer { height: 29px; flex: none; background: #232f3e; border-top: 1px solid #4b5563; display: flex; align-items: center; font-size: 12px; color: #fff; padding-left: 20px; white-space: nowrap; }
.aws-footer b { font-weight: 600; letter-spacing: -.4px; }
.aws-footer .feedback { width: 76px; letter-spacing: -.5px; }
.looking { width: 274px; color: #95a5a6; letter-spacing: -.07px; }
.aws-footer .unified { width: 90px; letter-spacing: -.22px; }
.ext { width: 14px; height: 14px; fill: none; stroke: #fff; stroke-width: 2; }
.aws-footer .copy { margin-left: 342px; width: 305px; letter-spacing: -.28px; }
.privacy { width: 64px; } .terms { width: 58px; }
.aws-footer .cookie { letter-spacing: -.49px; }

/* taskbar */
.taskbar { height: 48px; flex: none; display: flex; align-items: center; color: #fff; font-size: 12px; line-height: 16px; background: linear-gradient(90deg, #1c2d3a 0, #27292b 130px, #2b2b2b 620px, #1c2440 730px, #142052 800px, #14224f 1040px, #1b2937 1100px, #1b2a36 100%); }
.weather { width: 24px; height: 18px; margin: 0 7px 0 20px; }
.weather-text { width: 371px; display: flex; flex-direction: column; margin-top: 2px; letter-spacing: -.07px; }
.weather-text span:last-child { color: #c8ccce; }
.apps { display: flex; gap: 4px; }
.app { width: 40px; height: 40px; border-radius: 4px; display: grid; place-items: center; position: relative; }
.app > svg { width: 24px; height: 24px; }
.focus { background: #3b3b3b; }
.app > .who { position: absolute; left: 20px; top: 3px; width: 16px; height: 16px; }
.app.focus::after, .app.run::after { content: ""; position: absolute; bottom: 1px; left: 12px; width: 16px; height: 3px; border-radius: 2px; background: #1a8ff5; }
.app.run::after { left: 17px; width: 6px; background: #9aa3b5; }
.zoom { font: bold 7px "Open Sans", sans-serif; }
.tray { display: flex; align-items: center; margin-left: 176px; }
.tray svg { fill: none; stroke: #fff; stroke-width: 1.3; }
.up { width: 12px; height: 8px; margin-right: 9px; }
.sync { width: 18px; height: 18px; margin-right: 10px; }
.wifi { width: 16px; height: 13px; margin-right: 8px; }
.vol { width: 16px; height: 14px; margin-right: 8px; }
.bat { width: 17px; height: 14px; }
.clock { width: 86px; display: flex; flex-direction: column; align-items: flex-end; letter-spacing: -.05px; }
.clock span:first-child { letter-spacing: -1px; }
.count { width: 16px; height: 16px; margin-left: 8px; border-radius: 50%; background: #1092fb; color: #10233a; display: grid; place-items: center; font-size: 11px; }
```
